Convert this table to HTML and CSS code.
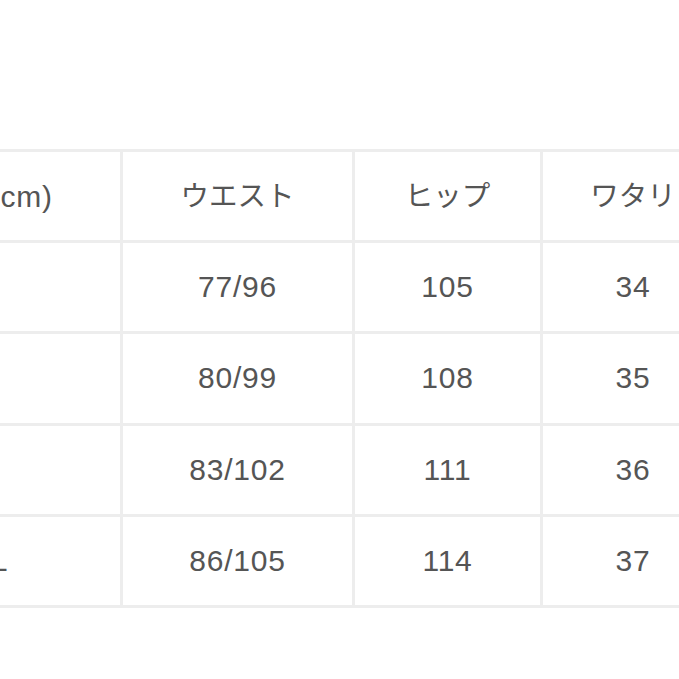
FILE: index.html
```html
<!DOCTYPE html>
<html lang="ja">
<head>
<meta charset="utf-8">
<title>サイズ表</title>
<link rel="stylesheet" href="styles.css">
</head>
<body>
<div class="page">
  <div class="size-table">
    <div class="cell head first">サイズ(cm)</div>
    <div class="cell head">ウエスト</div>
    <div class="cell head">ヒップ</div>
    <div class="cell head">ワタリ</div>

    <div class="cell">S</div>
    <div class="cell">77/96</div>
    <div class="cell">105</div>
    <div class="cell">34</div>

    <div class="cell">M</div>
    <div class="cell">80/99</div>
    <div class="cell">108</div>
    <div class="cell">35</div>

    <div class="cell">L</div>
    <div class="cell">83/102</div>
    <div class="cell">111</div>
    <div class="cell">36</div>

    <div class="cell">XL</div>
    <div class="cell">86/105</div>
    <div class="cell">114</div>
    <div class="cell">37</div>
  </div>
</div>
</body>
</html>
```

FILE: styles.css
```css
html, body {
  margin: 0;
  padding: 0;
  background: #ffffff;
  overflow: hidden;
}

.page {
  width: 679px;
  height: 679px;
  overflow: hidden;
  padding-top: 149px;
  box-sizing: border-box;
}

.size-table {
  display: grid;
  grid-template-columns: 262px 229px 185px 180px;
  grid-auto-rows: 88.2px;
  gap: 3px;
  padding: 3px 0;
  background: #ededed;
  margin-left: -142px;
  width: max-content;
}

.cell {
  background: #ffffff;
  display: flex;
  align-items: center;
  justify-content: center;
  font-family: "Liberation Sans", "Noto Sans CJK JP", sans-serif;
  font-size: 30px;
  letter-spacing: 0.8px;
  color: #555555;
}

.head {
  font-family: "Noto Sans CJK JP", "Liberation Sans", sans-serif;
  font-size: 28.5px;
  letter-spacing: 0;
  padding-bottom: 5px;
  box-sizing: border-box;
}

.first {
  font-family: "Liberation Sans", "Noto Sans CJK JP", sans-serif;
  font-size: 30px;
  letter-spacing: 0.8px;
  padding-right: 27px;
}
```
